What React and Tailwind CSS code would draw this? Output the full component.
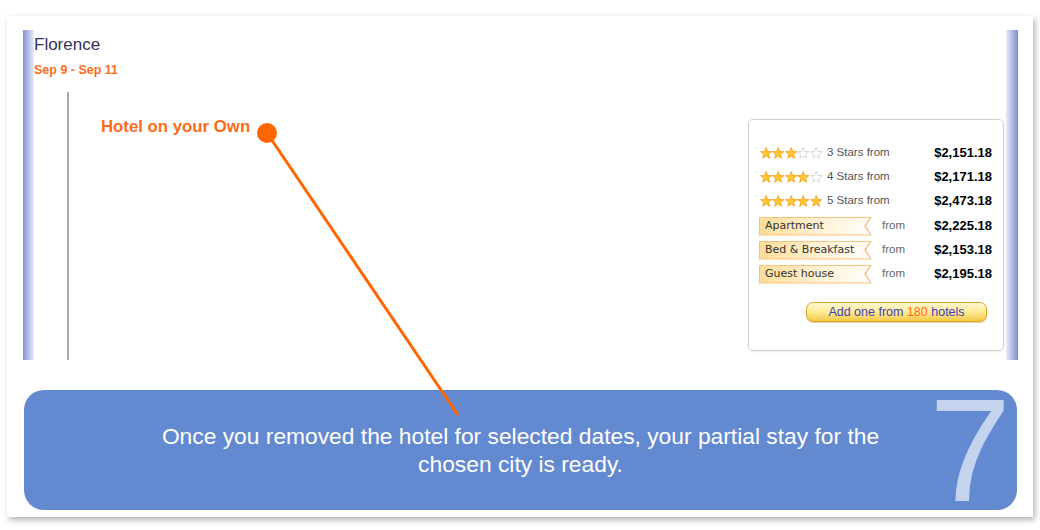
import React from 'react';

const STAR = '6,0.5 7.47,4.48 11.71,4.65 8.38,7.27 9.53,11.35 6,9 2.47,11.35 3.62,7.27 0.29,4.65 4.53,4.48';

const Stars = ({ count }) => (
  <div className="flex w-[62px]">
    {[0, 1, 2, 3, 4].map(i => (
      <svg key={i} width="12.4" height="12" viewBox="0 0 12 12">
        <polygon
          points={STAR}
          fill={i < count ? '#ffc630' : '#ffffff'}
          stroke={i < count ? '#f59e1f' : '#cfcfcf'}
          strokeWidth="0.8"
          strokeLinejoin="round"
        />
      </svg>
    ))}
  </div>
);

const starRows = [
  { n: 3, price: '$2,151.18' },
  { n: 4, price: '$2,171.18' },
  { n: 5, price: '$2,473.18' },
];

const typeRows = [
  { label: 'Apartment', price: '$2,225.18' },
  { label: 'Bed & Breakfast', price: '$2,153.18' },
  { label: 'Guest house', price: '$2,195.18' },
];

const Tag = ({ children }) => (
  <div className="-ml-px w-[113px] h-[19px] p-px bg-[#f7c27c] [clip-path:polygon(0_0,100%_0,calc(100%-6px)_50%,100%_100%,0_100%)]">
    <div className="h-full flex items-center pl-[5px] bg-gradient-to-r from-[#fedd97] via-[#fff0cf] to-[#ffffff] [clip-path:polygon(0_0,calc(100%-1px)_0,calc(100%-7px)_50%,calc(100%-1px)_100%,0_100%)] font-['DejaVu_Sans',Verdana,sans-serif] text-[11px] text-[#333]">
      {children}
    </div>
  </div>
);

export default function App() {
  return (
    <div className="relative w-[1040px] h-[530px] bg-white pt-[16px] pl-[7px] font-['Liberation_Sans',Arial,sans-serif]">
      <div className="w-[1026px] h-[501px] bg-white shadow-[2px_3px_6px_rgba(0,0,0,0.3)] pt-[14px] pl-[16px] pr-[15px] flex flex-col">
        <div className="flex h-[330px]">
          <div className="w-[11px] bg-gradient-to-r from-[#8391d2] to-[#eaeef9]" />
          <div className="flex-1 flex flex-col">
            <div className="pt-[5px] text-[17px] leading-[20px] text-[#32325e]">Florence</div>
            <div className="mt-[7px] text-[12.5px] leading-[16px] font-bold text-[#ff6a1a]">Sep 9 - Sep 11</div>
            <div className="flex flex-1 mt-[14px]">
              <div className="ml-[33px] w-[2px] bg-[#a8a8a8]" />
              <div className="flex-1 pl-[32px] pt-[25px]">
                <div className="text-[16.8px] leading-[20px] font-bold text-[#ff6a1a]">Hotel on your Own</div>
              </div>
              <div className="self-start mt-[27px] mr-[2px] w-[256px] h-[232px] border border-[#cfcfcf] rounded-[5px] shadow-[0_1px_2px_rgba(0,0,0,0.08)] pt-[21px] px-[11px] flex flex-col">
                {starRows.map(r => (
                  <div key={r.n} className="h-[24px] flex items-center">
                    <Stars count={r.n} />
                    <span className="ml-[5px] text-[11.5px] text-[#555]">{r.n} Stars from</span>
                    <span className="ml-auto text-[13px] font-bold text-black">{r.price}</span>
                  </div>
                ))}
                <div className="pt-px">
                  {typeRows.map(r => (
                    <div key={r.label} className="h-[24px] flex items-center">
                      <Tag>{r.label}</Tag>
                      <span className="ml-[10px] text-[11.5px] text-[#666]">from</span>
                      <span className="ml-auto text-[13px] font-bold text-black">{r.price}</span>
                    </div>
                  ))}
                </div>
                <div className="self-end mt-[16px] mr-[5px] w-[181px] h-[20px] rounded-[7px] border border-[#d9a823] bg-gradient-to-b from-[#fff8cf] via-[#ffeb96] to-[#f3c73f] shadow-[0_1px_1px_rgba(160,120,0,0.35)] flex items-center justify-center text-[12.5px] text-[#3d3db3]">
                  Add one from&nbsp;<span className="text-[#ff6a1a]">180</span>&nbsp;hotels
                </div>
              </div>
            </div>
          </div>
          <div className="w-[12px] bg-gradient-to-l from-[#7d8ccf] to-[#eaeef9]" />
        </div>
        <div className="relative mt-[30px] mx-px h-[120px] rounded-[20px] bg-[#6389d0] flex items-center justify-center">
          <p className="max-w-[740px] text-center text-[22.8px] leading-[28px] text-white">
            Once you removed the hotel for selected dates, your partial stay for the chosen city is ready.
          </p>
          <span className="absolute right-[6px] top-[8px] text-[147px] leading-[105px] text-[#c4d3ee]">7</span>
        </div>
      </div>
      <svg className="absolute inset-0 pointer-events-none" width="1040" height="530">
        <line x1="267" y1="133" x2="458" y2="415" stroke="#ff6600" strokeWidth="3" />
        <circle cx="267" cy="133" r="10" fill="#ff6600" />
      </svg>
    </div>
  );
}
